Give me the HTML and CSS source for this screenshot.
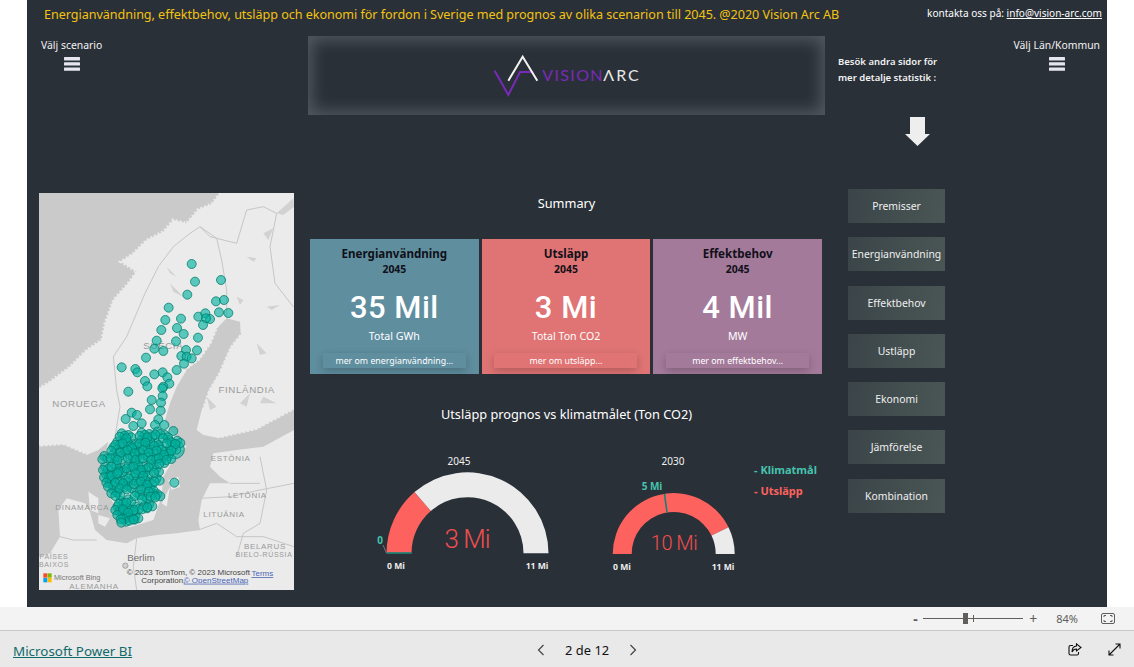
FILE: index.html
```html
<!DOCTYPE html>
<html lang="sv">
<head>
<meta charset="utf-8">
<title>Microsoft Power BI</title>
<link rel="stylesheet" href="styles.css">
</head>
<body>
<div class="stage">
  <main class="canvas">
    <header class="topbar">
      <h1 class="headline">Energianvändning, effektbehov, utsläpp och ekonomi för fordon i Sverige med prognos av olika scenarion till 2045. @2020 Vision Arc AB</h1>
      <p class="contact">kontakta oss på: <a href="#">info@vision-arc.com</a></p>
    </header>
    <div class="report">
      <section class="col-map">
        <div class="slicer slicer-left">
          <span>Välj scenario</span>
          <svg class="burger" viewBox="0 0 16 14"><rect y="0" width="16" height="3.4" rx=".6"/><rect y="5.2" width="16" height="3.4" rx=".6"/><rect y="10.4" width="16" height="3.4" rx=".6"/></svg>
        </div>
        <svg class="map" viewBox="27 9 765 1191">
          <rect class="sea" x="27" y="9" width="765" height="1191"/>
          <g class="terrain">
            <path class="land" d="M570 9L545 42L505 58L470 100L430 90L400 125L350 150L310 190L272 215L320 245L290 285L250 330L225 400L215 450L170 480L120 530L60 575L27 595L27 770L100 765L170 795L205 780L235 755L225 800L220 850L240 920L260 960L265 1000L300 1012L370 990L395 920L400 860L435 800L470 770L420 720L405 690L420 640L440 590L470 540L510 510L545 460L565 410L590 385L630 395L632 430L600 470L565 550L535 600L515 660L500 720L520 735L570 745L680 720L792 660L792 9Z"/>
            <path class="land" d="M792 720L700 770L620 780L550 790L540 830L570 860L600 880L540 880L515 930L505 990L510 1020L440 1030L380 1035L320 1045L290 1060L230 1050L195 1020L180 965L165 940L110 925L85 960L90 1040L60 1090L27 1100L27 1200L792 1200Z"/>
            <path class="land" d="M175 905L205 925L205 970L180 960ZM415 870L445 860L450 890L425 900ZM395 940L420 890L410 950ZM205 975L240 985L225 1010L205 1000Z"/>
            <path class="fringe" d="M570 9L545 42L505 58L470 100L430 90L400 125L350 150L310 190L272 215L320 245L290 285L250 330L225 400L215 450L170 480L120 530L60 575L27 595"/>
            <path class="shore" d="M470 540L510 510L545 460L565 410M632 430L600 470L565 550L535 600L515 660M570 745L680 720L792 660M27 770L100 765L170 795"/>
            <path class="sea-detail" d="M740 70L790 25L792 50L760 75ZM700 130L730 115L715 150ZM650 200L680 205L670 215ZM410 230L440 260L420 250ZM420 280L460 320L430 305ZM680 460L710 490L690 495ZM710 350L750 345L725 360ZM620 320L640 330L630 345ZM700 620L740 640L690 640ZM530 620L560 650L540 660ZM630 640L660 610L650 650Z"/>
            <path class="border" d="M510 110L480 130L430 170L385 230L345 310L290 440L250 500L260 600L270 650L255 740M510 110L560 145L575 210L590 300L590 385M510 110L540 140L620 160L650 60L700 50L740 70L720 170L735 280L790 350M505 1020L560 1000L620 1040L700 1040L792 1070M510 925L600 920L690 900L792 880M600 880L690 880M690 800L710 900L690 1000L640 1030L620 1100M320 1045L310 1130L320 1200M90 1040L130 1050L200 1050"/>
          </g>
          <text class="lbl" x="400" y="476">SUÉCIA</text>
          <text class="lbl" x="650" y="610">FINLÂNDIA</text>
          <text class="lbl" x="147" y="650">NORUEGA</text>
          <text class="lbl sm" x="602" y="813">ESTÔNIA</text>
          <text class="lbl sm" x="652" y="924">LETÔNIA</text>
          <text class="lbl sm" x="582" y="980">LITUÂNIA</text>
          <text class="lbl sm" x="157" y="959">DINAMARCA</text>
          <text class="lbl sm" x="705" y="1078">BELARUS</text>
          <text class="lbl xs" x="702" y="1102">BIELO-RÚSSIA</text>
          <text class="lbl xs" x="72" y="1108">PAÍSES</text>
          <text class="lbl xs" x="72" y="1132">BAIXOS</text>
          <text class="lbl sm" x="192" y="1196">ALEMANHA</text>
          <text class="lbl city" x="333" y="1114">Berlim</text>
          <circle class="city-dot" cx="286" cy="1127" r="8"/>
          <g class="dots">
            <circle cx="485" cy="222"/><circle cx="495" cy="275"/><circle cx="573" cy="270"/><circle cx="472" cy="314"/><circle cx="558" cy="334"/><circle cx="582" cy="330"/><circle cx="416" cy="353"/><circle cx="453" cy="386"/><circle cx="406" cy="390"/><circle cx="505" cy="380"/><circle cx="526" cy="370"/><circle cx="540" cy="387"/><circle cx="528" cy="385"/><circle cx="567" cy="367"/><circle cx="595" cy="369"/><circle cx="519" cy="405"/><circle cx="441" cy="414"/><circle cx="394" cy="420"/><circle cx="461" cy="432"/><circle cx="504" cy="443"/><circle cx="380" cy="452"/><circle cx="438" cy="454"/><circle cx="373" cy="476"/><circle cx="400" cy="483"/><circle cx="468" cy="480"/><circle cx="501" cy="481"/><circle cx="348" cy="503"/><circle cx="454" cy="498"/><circle cx="470" cy="500"/><circle cx="485" cy="505"/><circle cx="462" cy="521"/><circle cx="275" cy="532"/><circle cx="316" cy="537"/><circle cx="322" cy="547"/><circle cx="440" cy="540"/><circle cx="398" cy="547"/><circle cx="373" cy="553"/><circle cx="412" cy="562"/><circle cx="345" cy="573"/><circle cx="418" cy="581"/><circle cx="352" cy="589"/><circle cx="400" cy="590"/><circle cx="397" cy="595"/><circle cx="295" cy="605"/>
            <circle cx="365" cy="630"/><circle cx="398" cy="618"/><circle cx="393" cy="638"/><circle cx="360" cy="658"/><circle cx="392" cy="662"/><circle cx="305" cy="668"/><circle cx="321" cy="675"/><circle cx="287" cy="687"/><circle cx="385" cy="688"/><circle cx="310" cy="708"/><circle cx="335" cy="700"/><circle cx="375" cy="705"/><circle cx="403" cy="705"/><circle cx="430" cy="723"/><circle cx="433" cy="878"/>
            <circle class="big" cx="435" cy="778"/>
            <g id="dense">
            <circle cx="275" cy="730"/><circle cx="295" cy="735"/><circle cx="335" cy="728"/><circle cx="358" cy="732"/><circle cx="382" cy="725"/><circle cx="405" cy="735"/>
            <circle cx="262" cy="755"/><circle cx="284" cy="750"/><circle cx="312" cy="762"/><circle cx="334" cy="750"/><circle cx="352" cy="748"/><circle cx="378" cy="758"/><circle cx="416" cy="750"/><circle cx="442" cy="752"/>
            <circle cx="250" cy="772"/><circle cx="278" cy="778"/><circle cx="298" cy="770"/><circle cx="320" cy="780"/><circle cx="345" cy="770"/><circle cx="362" cy="778"/><circle cx="386" cy="772"/><circle cx="408" cy="784"/><circle cx="430" cy="772"/>
            <circle cx="223" cy="798"/><circle cx="248" cy="795"/><circle cx="268" cy="800"/><circle cx="300" cy="795"/><circle cx="322" cy="800"/><circle cx="345" cy="795"/><circle cx="370" cy="800"/><circle cx="392" cy="795"/><circle cx="415" cy="800"/>
            <circle cx="225" cy="830"/><circle cx="250" cy="820"/><circle cx="272" cy="835"/><circle cx="296" cy="825"/><circle cx="316" cy="820"/><circle cx="340" cy="830"/><circle cx="362" cy="822"/><circle cx="394" cy="812"/>
            <circle cx="228" cy="852"/><circle cx="250" cy="848"/><circle cx="268" cy="840"/><circle cx="302" cy="855"/><circle cx="322" cy="840"/><circle cx="345" cy="848"/><circle cx="378" cy="838"/>
            <circle cx="235" cy="868"/><circle cx="262" cy="868"/><circle cx="285" cy="870"/><circle cx="318" cy="872"/><circle cx="338" cy="865"/><circle cx="358" cy="875"/><circle cx="380" cy="865"/>
            <circle cx="240" cy="880"/><circle cx="275" cy="885"/><circle cx="296" cy="888"/><circle cx="340" cy="888"/><circle cx="362" cy="895"/>
            <circle cx="250" cy="900"/><circle cx="262" cy="908"/><circle cx="320" cy="908"/><circle cx="342" cy="918"/><circle cx="368" cy="910"/><circle cx="382" cy="912"/>
            <circle cx="272" cy="932"/><circle cx="295" cy="928"/><circle cx="318" cy="950"/><circle cx="342" cy="948"/><circle cx="358" cy="942"/>
            <circle cx="262" cy="950"/><circle cx="285" cy="948"/><circle cx="300" cy="958"/>
            <circle cx="268" cy="965"/><circle cx="285" cy="975"/><circle cx="278" cy="978"/><circle cx="305" cy="982"/><circle cx="316" cy="978"/><circle cx="280" cy="988"/>
            </g>
            <use href="#dense" x="9" y="7"/>
            <use href="#dense" x="-6" y="10"/>
          </g>
          <rect class="ms-r" x="40" y="1150" width="12" height="13"/><rect class="ms-g" x="53" y="1150" width="12" height="13"/><rect class="ms-b" x="40" y="1164" width="12" height="13"/><rect class="ms-y" x="53" y="1164" width="12" height="13"/>
          <text class="bing" x="72" y="1171">Microsoft Bing</text>
          <text class="attr" x="475" y="1154">© 2023 TomTom, © 2023 Microsoft</text>
          <text class="attr" x="400" y="1178">Corporation,</text>
          <text class="attr link" x="558" y="1178">© OpenStreetMap</text>
          <text class="attr link" x="697" y="1158">Terms</text>
        </svg>
      </section>

      <section class="col-main">
        <div class="logo-box">
          <svg class="logo" viewBox="66 42 450 132">
            <path class="logo-v" d="M74 92L115 165L150 96H190"/>
            <path class="logo-a" d="M115 122L158 50L202 122"/>
            <text class="logo-t" x="217" y="122">VISION</text>
            <text class="logo-u" x="400" y="122">ΛRC</text>
          </svg>
        </div>
        <h2 class="heading summary">Summary</h2>
        <div class="cards">
          <article class="card card-blue">
            <h3>Energianvändning</h3><p class="year">2045</p><p class="value">35 Mil</p><p class="unit">Total GWh</p>
            <a class="more" href="#">mer om energianvändning...</a>
          </article>
          <article class="card card-red">
            <h3>Utsläpp</h3><p class="year">2045</p><p class="value">3 Mi</p><p class="unit">Total Ton CO2</p>
            <a class="more" href="#">mer om utsläpp...</a>
          </article>
          <article class="card card-purple">
            <h3>Effektbehov</h3><p class="year">2045</p><p class="value">4 Mil</p><p class="unit">MW</p>
            <a class="more" href="#">mer om effektbehov...</a>
          </article>
        </div>
        <h2 class="heading forecast">Utsläpp prognos vs klimatmålet (Ton CO2)</h2>
        <div class="gauges">
          <svg class="gauge gauge-a" viewBox="350 450 210 140">
            <text class="g-title" x="459" y="466">2045</text>
            <path class="g-red" d="M386.5 554.3A81 81 0 0 1 414.5 493.1L430.8 512A56 56 0 0 0 411.5 554.3Z"/>
            <path class="g-rest" d="M414.5 493.1A81 81 0 0 1 548.5 554.3L523.5 554.3A56 56 0 0 0 430.8 512Z"/>
            <path class="g-target" d="M386.5 554L411.5 554"/>
            <path class="g-lead" d="M383 546L386.5 554"/>
            <text class="g-goal" x="380" y="545">0</text>
            <text class="g-val" x="467" y="549">3 Mi</text>
            <text class="g-end" x="396" y="570">0 Mi</text>
            <text class="g-end" x="537" y="570">11 Mi</text>
          </svg>
          <svg class="gauge gauge-b" viewBox="590 450 160 140">
            <text class="g-title" x="673" y="466">2030</text>
            <path class="g-red" d="M612.7 555A61 61 0 0 1 728.5 528.3L711.5 536.6A42 42 0 0 0 631.7 555Z"/>
            <path class="g-rest" d="M728.5 528.3A61 61 0 0 1 734.7 555L715.7 555A42 42 0 0 0 711.5 536.6Z"/>
            <path class="g-target" d="M664.5 495L667 513.5"/>
            <text class="g-goal" x="652" y="491">5 Mi</text>
            <text class="g-val small" x="674" y="551">10 Mi</text>
            <text class="g-end" x="622" y="571">0 Mi</text>
            <text class="g-end" x="723" y="571">11 Mi</text>
          </svg>
          <ul class="legend">
            <li class="leg-goal">- Klimatmål</li>
            <li class="leg-out">- Utsläpp</li>
          </ul>
        </div>
      </section>

      <nav class="col-nav">
        <p class="visit">Besök andra sidor för<br>mer detalje statistik :</p>
        <svg class="arrow" viewBox="0 0 25 29"><path d="M5 0H20V17H25L12.5 29L0 17H5Z"/></svg>
        <ul class="pages">
          <li><a href="#">Premisser</a></li>
          <li><a href="#">Energianvändning</a></li>
          <li><a href="#">Effektbehov</a></li>
          <li><a href="#">Ustläpp</a></li>
          <li><a href="#">Ekonomi</a></li>
          <li><a href="#">Jämförelse</a></li>
          <li><a href="#">Kombination</a></li>
        </ul>
      </nav>

      <section class="col-right">
        <div class="slicer">
          <span>Välj Län/Kommun</span>
          <svg class="burger" viewBox="0 0 16 14"><rect y="0" width="16" height="3.4" rx=".6"/><rect y="5.2" width="16" height="3.4" rx=".6"/><rect y="10.4" width="16" height="3.4" rx=".6"/></svg>
        </div>
      </section>
    </div>
  </main>
</div>

<div class="zoombar">
  <span class="zoom-sign">-</span>
  <div class="slider"><i class="tick"></i><i class="thumb"></i></div>
  <span class="zoom-plus">+</span>
  <span class="zoom-pct">84%</span>
  <svg class="fit" viewBox="0 0 14 11"><rect x=".5" y=".5" width="13" height="10" rx="1.5"/><path d="M3 4V2.5H5M9 2.5H11V4M11 7V8.5H9M5 8.5H3V7"/></svg>
</div>
<footer class="footer">
  <a class="brand" href="#">Microsoft Power BI</a>
  <div class="pager">
    <svg class="chev" viewBox="0 0 8 12"><path d="M6.5 1L1.5 6L6.5 11"/></svg>
    <span>2 de 12</span>
    <svg class="chev" viewBox="0 0 8 12"><path d="M1.5 1L6.5 6L1.5 11"/></svg>
  </div>
  <svg class="share" viewBox="0 0 14 13"><path d="M5 2.5H2.5A1.5 1.5 0 0 0 1 4V10.5A1.5 1.5 0 0 0 2.5 12H9A1.5 1.5 0 0 0 10.5 10.5V9"/><path d="M8.5 .8L13 4.5L8.5 8V6C6 6 4.8 7.2 4 9C4 5.5 5.8 3.2 8.5 3Z"/></svg>
  <svg class="expand" viewBox="0 0 13 13"><path d="M1 12L12 1M7.5 1H12V5.5M1 7.5V12H5.5"/></svg>
</footer>
</body>
</html>
```
FILE: styles.css
```css
* { box-sizing: border-box; }
html, body { margin: 0; padding: 0; }
body {
  width: 1134px;
  height: 667px;
  overflow: hidden;
  background: #fff;
  font-family: "Noto Sans", "Open Sans", sans-serif;
}
h1, h2, h3, p, ul { margin: 0; padding: 0; font-weight: normal; }
ul { list-style: none; }
a { color: inherit; }

.stage { height: 607px; padding-left: 27px; }
.canvas { width: 1080px; height: 607px; background: #2a3038; color: #fff; display: flex; flex-direction: column; }

.topbar { height: 36px; flex: none; display: flex; justify-content: space-between; padding: 6px 5px 0 17px; }
.headline { font-size: 12.6px; line-height: 18px; color: #f2c311; letter-spacing: -.05px; }
.contact { font-size: 10.05px; line-height: 14px; color: #fff; }

.report { flex: 1; display: flex; padding: 0 7px 17px 12px; min-height: 0; }

.col-map { width: 255px; flex: none; display: flex; flex-direction: column; justify-content: space-between; }
.slicer { display: flex; flex-direction: column; align-items: center; font-size: 10.4px; line-height: 14px; color: #f2f2f2; width: max-content; padding-top: 2px; }
.slicer-left { margin-left: 2px; }
.burger { display: block; width: 16px; height: 14px; margin-top: 5px; fill: #e5e5f0; }

.map { display: block; width: 255px; height: 397px; }
.sea { fill: #cacaca; }
.terrain { filter: blur(.5px); }
.land { fill: #ebebeb; }
.fringe { fill: none; stroke: #ebebeb; stroke-width: 9; stroke-dasharray: 5 7; }
.shore { fill: none; stroke: #cacaca; stroke-width: 7; stroke-dasharray: 4 9; }
.sea-detail { fill: #d2d2d2; }
.border { fill: none; stroke: #c6c6c6; stroke-width: 3; }
.lbl { font-family: "Liberation Sans", sans-serif; font-size: 29px; letter-spacing: 2px; fill: #9a9a9a; text-anchor: middle; }
.lbl.sm { font-size: 24px; }
.lbl.xs { font-size: 21px; }
.lbl.city { font-size: 29px; letter-spacing: 0; fill: #6e6e6e; }
.city-dot { fill: #d0d0d0; stroke: #8a8a8a; stroke-width: 2; }
.dots circle { r: 13.5px; fill: rgba(0, 178, 158, .62); stroke: rgba(0, 120, 105, .75); stroke-width: 3; }
.dots circle.big { r: 28px; }
.ms-r { fill: #f25022; } .ms-g { fill: #7fba00; } .ms-b { fill: #00a4ef; } .ms-y { fill: #ffb900; }
.bing { font-family: "Liberation Sans", sans-serif; font-size: 22px; fill: #777; }
.attr { font-family: "Liberation Sans", sans-serif; font-size: 24px; fill: #444; text-anchor: middle; }
.attr.link { fill: #4a66b5; text-decoration: underline; }

.col-main { width: 517px; flex: none; margin-left: 14px; display: flex; flex-direction: column; }
.logo-box { height: 79px; flex: none; display: flex; align-items: center; justify-content: center; background: #2a3038; box-shadow: inset 0 0 16px 4px rgba(255, 255, 255, .2); }
.logo { display: block; width: 150px; height: 44px; }
.logo-v { fill: none; stroke: #7a2ab8; stroke-width: 6; }
.logo-a { fill: none; stroke: #f2f2f2; stroke-width: 6; }
.logo-t { font-family: "Lato", sans-serif; font-size: 48px; fill: #7a2ab8; letter-spacing: 4px; }
.logo-u { font-family: "Lato", sans-serif; font-size: 48px; fill: #e8e8e8; letter-spacing: 6px; }

.heading { font-size: 12.75px; line-height: 20px; text-align: center; color: #fff; }
.summary { margin-top: 78px; }
.forecast { margin-top: 30px; }

.cards { display: grid; grid-template-columns: repeat(3, 1fr); gap: 3px; margin: 26px 3px 0 2px; }
.card { height: 135px; display: flex; flex-direction: column; align-items: center; padding-top: 7px; }
.card-blue { background: #5f8e9f; }
.card-red { background: #e07474; }
.card-purple { background: #a47a9b; }
.card h3 { font-size: 11.6px; line-height: 16px; font-weight: 700; color: #101018; }
.year { font-size: 10.4px; line-height: 14px; font-weight: 700; color: #101018; }
.value { font-family: "Roboto", sans-serif; font-weight: 500; font-size: 31px; line-height: 36px; letter-spacing: .5px; margin-top: 14px; color: #fff; }
.unit { font-size: 10.6px; line-height: 14px; margin-top: 3px; color: #fff; }
.more { width: 143px; height: 15px; margin-top: auto; margin-bottom: 6px; font-size: 8.8px; line-height: 17px; text-align: center; text-decoration: none; color: #fff; box-shadow: 0 3px 8px rgba(0, 0, 0, .22); }
.card-blue .more { background: #5f8e9f; }
.card-red .more { background: #e07474; }
.card-purple .more { background: #a47a9b; }

.gauges { flex: 1; display: flex; margin-top: 25px; }
.gauge { display: block; flex: none; height: 140px; }
.gauge-a { width: 210px; margin-left: 42px; }
.gauge-b { width: 160px; margin-left: 30px; }
.g-red { fill: #fd625e; }
.g-rest { fill: #ebebeb; }
.g-target { stroke: #0e8478; stroke-width: 1.6; fill: none; }
.g-lead { stroke: #777; stroke-width: 1; fill: none; }
.g-title { font-size: 10px; fill: #f0f0f0; text-anchor: middle; }
.g-goal { font-size: 10px; font-weight: 700; fill: #45c3ae; text-anchor: middle; }
.g-val { font-family: "Roboto", sans-serif; font-weight: 300; font-size: 26px; letter-spacing: -1px; fill: #f04e4e; text-anchor: middle; }
.g-val.small { font-size: 20px; letter-spacing: -.5px; }
.g-end { font-size: 8.6px; font-weight: 700; fill: #eee; text-anchor: middle; }
.legend { margin-left: 4px; padding-top: 10px; font-size: 11px; font-weight: 700; line-height: 21px; white-space: nowrap; }
.leg-goal { color: #45c3ae; }
.leg-out { color: #fd625e; }

.col-nav { width: 107px; flex: none; margin-left: 13px; display: flex; flex-direction: column; }
.visit { margin-top: 18px; font-size: 9.5px; line-height: 16px; font-weight: 600; color: #f2f2f2; white-space: nowrap; }
.arrow { display: block; width: 25px; height: 29px; margin: 31px 0 0 67px; fill: #eeeeee; flex: none; }
.pages { margin: 43px 0 0 10px; width: 97px; display: flex; flex-direction: column; gap: 14.3px; }
.pages a { display: flex; align-items: center; justify-content: center; height: 34px; font-size: 10.4px; text-decoration: none; color: #f0f0f0; background: linear-gradient(100deg, #3b4549, #4a5655); white-space: nowrap; }

.col-right { flex: 1; display: flex; justify-content: flex-end; }

.zoombar { height: 23px; background: #f3f3f3; display: flex; align-items: center; padding-right: 19px; justify-content: flex-end; color: #605e5c; }
.zoom-sign { font-size: 14px; font-weight: 700; line-height: 1; width: 8px; margin-right: 3px; }
.slider { position: relative; width: 100px; height: 1px; background: #605e5c; margin-left: -1px; }
.thumb { position: absolute; left: 40px; top: -5px; width: 5px; height: 11px; background: #605e5c; }
.tick { position: absolute; left: 50px; top: -3px; width: 1px; height: 7px; background: #605e5c; }
.zoom-plus { font-size: 14px; line-height: 1; margin-left: 6px; }
.zoom-pct { font-size: 11px; margin-left: 19px; }
.fit { width: 14px; height: 11px; margin-left: 23px; fill: none; stroke: #605e5c; stroke-width: 1; }

.footer { height: 37px; border-top: 1px solid #c8c8c8; background: #e9e9e9; display: flex; align-items: center; padding: 0 13px; }
.brand { font-size: 13.4px; color: #0f6a6a; padding-top: 3px; }
.pager { display: flex; align-items: center; gap: 20px; margin-left: 405px; font-size: 12.9px; color: #111; padding-top: 1px; }
.chev { width: 8px; height: 12px; fill: none; stroke: #444; stroke-width: 1.2; }
.share { width: 14px; height: 13px; margin-left: auto; fill: none; stroke: #111; stroke-width: 1.1; }
.expand { width: 13px; height: 13px; margin-left: 26px; fill: none; stroke: #111; stroke-width: 1.1; }
```
